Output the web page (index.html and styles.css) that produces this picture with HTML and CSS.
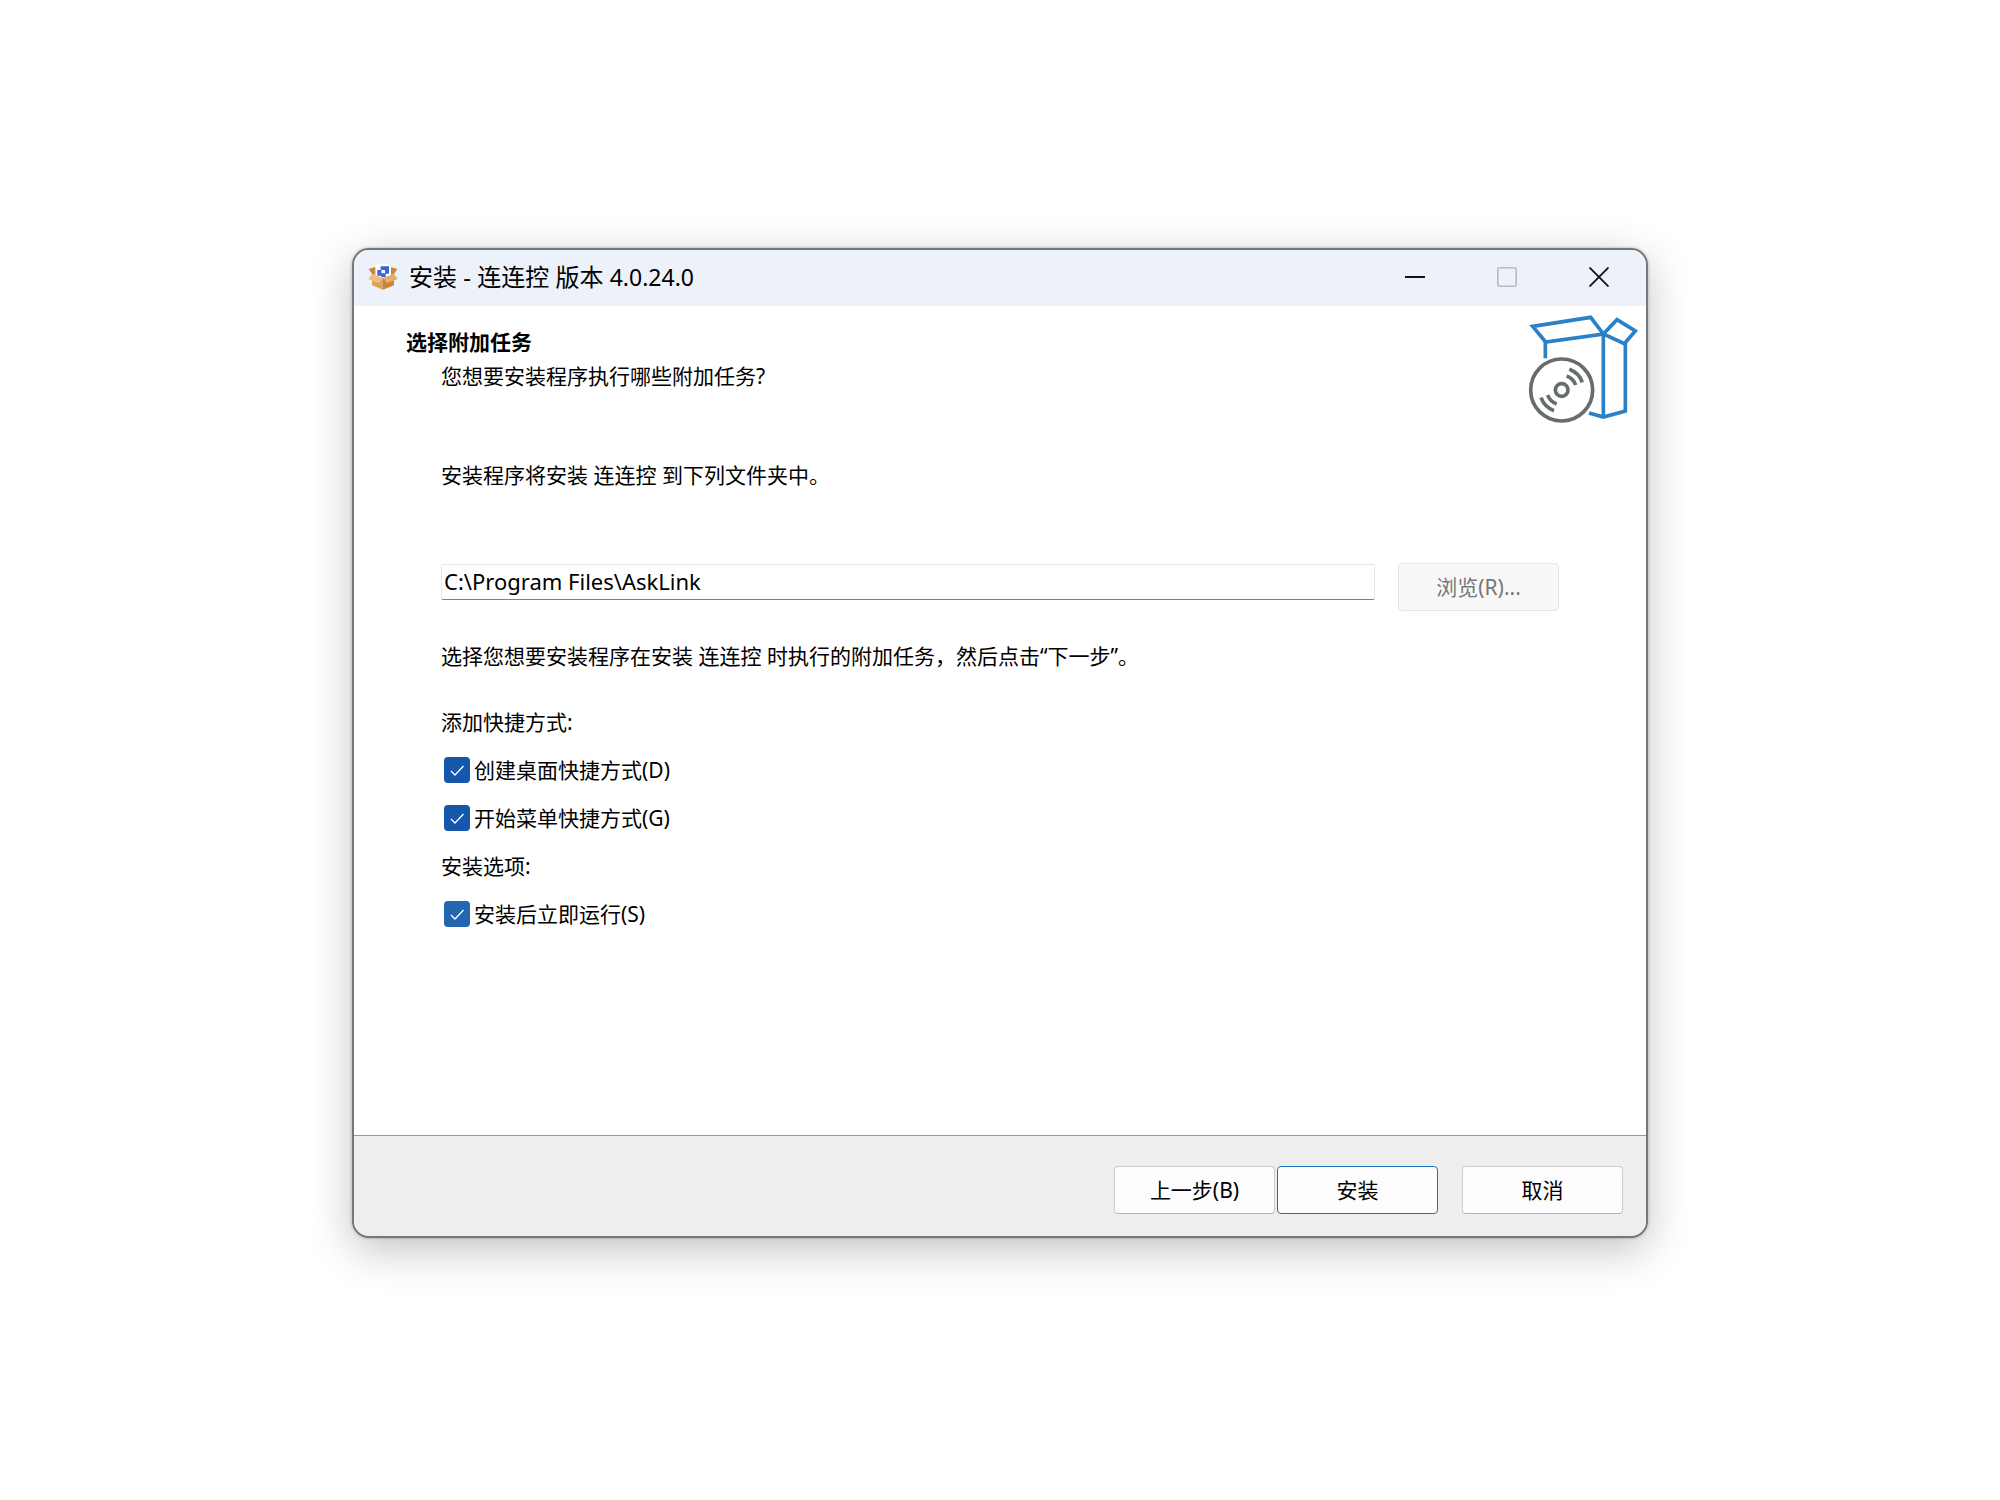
FILE: index.html
```html
<!DOCTYPE html>
<html lang="zh-CN">
<head>
    <meta charset="UTF-8">
    <meta name="viewport" content="width=device-width, initial-scale=1.0">
    <title>安装 - 连连控</title>
    <link rel="stylesheet" href="styles.css">
</head>
<body>

<div class="window">
    <!-- Title bar -->
    <div class="titlebar">
        <svg class="app-icon" viewBox="0 0 90 78" aria-hidden="true">
            <path d="M2 15 L22 9 L45 22 L68 9 L88 15 L78 30 L45 42 L12 30 Z" fill="#c98743"/>
            <rect x="22" y="1" width="47" height="42" rx="9" fill="#ffffff"/>
            <path d="M38 7h25v22h-10v10H40v-4H28V18h10z" fill="#3f62d6"/>
            <path d="M40 18h11v10H40z" fill="#ffffff"/>
            <path d="M12 32 L45 42 V77 L12 64 Z" fill="#e0a25c"/>
            <path d="M78 32 L45 42 V77 L78 64 Z" fill="#c9843f"/>
            <path d="M12 29 L45 42 L33 57 L1 45 Z" fill="#eebd85"/>
            <path d="M78 29 L45 42 L57 57 L89 45 Z" fill="#e6ad6e"/>
        </svg>
        <span class="title">安装 - 连连控 版本 <span class="version">4.0.24.0</span></span>
        <div class="window-controls">
            <button type="button" aria-label="最小化">
                <svg viewBox="0 0 20 20"><path d="M0 10H20" stroke="#111" stroke-width="2"/></svg>
            </button>
            <button type="button" aria-label="最大化" disabled>
                <svg viewBox="0 0 20 20"><rect x="0.8" y="0.8" width="18.4" height="18.4" rx="2" fill="none" stroke="#b8babf" stroke-width="1.6"/></svg>
            </button>
            <button type="button" aria-label="关闭">
                <svg viewBox="0 0 20 20"><path d="M0.5 0.5L19.5 19.5M19.5 0.5L0.5 19.5" stroke="#111" stroke-width="1.8"/></svg>
            </button>
        </div>
    </div>

    <form>
        <!-- Page heading -->
        <div class="header">
            <div class="header-text">
                <h1>选择附加任务</h1>
                <p>您想要安装程序执行哪些附加任务?</p>
            </div>
            <svg class="setup-icon" viewBox="0 0 336 330" fill="none" stroke-width="11" aria-hidden="true">
                <g stroke="#2b80c6">
                    <path d="M14 37 L188 10 L226 60 L53 84 Z"/>
                    <path d="M226 60 L267 17 L322 51 L289 89 Z"/>
                    <path d="M52 82 V133"/>
                    <path d="M226 60 V308"/>
                    <path d="M292 87 V291 L226 309 L183 297"/>
                </g>
                <g stroke="#666d6d">
                    <circle cx="101" cy="228" r="93"/>
                    <circle cx="101" cy="228" r="19"/>
                    <path d="M124 166 A66 66 0 0 1 163 205"/>
                    <path d="M116 186 A45 45 0 0 1 143 213"/>
                    <path d="M78 290 A66 66 0 0 1 39 251"/>
                    <path d="M86 270 A45 45 0 0 1 59 243"/>
                </g>
            </svg>
        </div>

        <div class="content">
            <label for="installDir">安装程序将安装 连连控 到下列文件夹中。</label>
            <div class="path-row">
                <input type="text" id="installDir" name="installDir" value="C:\Program Files\AskLink">
                <button type="button" class="btn" disabled>浏览(R)...</button>
            </div>
            <p>选择您想要安装程序在安装 连连控 时执行的附加任务，然后点击“下一步”。</p>

            <!-- Task list -->
            <div class="tasks">
                <div class="task-group">添加快捷方式:</div>
                <div class="task">
                    <input type="checkbox" id="desktopIcon" checked>
                    <label for="desktopIcon">创建桌面快捷方式(D)</label>
                </div>
                <div class="task">
                    <input type="checkbox" id="startMenu" checked>
                    <label for="startMenu">开始菜单快捷方式(G)</label>
                </div>
                <div class="task-group">安装选项:</div>
                <div class="task">
                    <input type="checkbox" id="runAfter" class="hot" checked>
                    <label for="runAfter">安装后立即运行(S)</label>
                </div>
            </div>
        </div>

        <div class="footer">
            <button type="button" class="btn">上一步(B)</button>
            <button type="submit" class="btn btn-default">安装</button>
            <button type="button" class="btn btn-cancel">取消</button>
        </div>
    </form>
</div>

</body>
</html>
```
FILE: styles.css
```css
* {
    box-sizing: border-box;
}

body {
    margin: 0;
    padding: 248px 20px 80px;
    background-color: #fff;
    color: #000;
    font-family: "Noto Sans", "Noto Sans CJK SC", sans-serif;
    font-size: 21px;
    line-height: 32px;
}

h1,
p {
    margin: 0;
}

h1 {
    font-size: 21px;
    font-weight: bold;
}

button,
input {
    font: inherit;
    color: inherit;
}

.window {
    max-width: 1296px;
    margin: 0 auto;
    background-color: #fff;
    border: 2px solid #777;
    border-radius: 17px;
    overflow: hidden;
    box-shadow: 0 0 3px rgba(0, 0, 0, 0.3), 0 12px 44px rgba(0, 0, 0, 0.24);
}

/* Title bar */
.titlebar {
    display: flex;
    align-items: center;
    height: 56px;
    padding: 0 1px 2px 14px;
    background-color: #edf1f9;
}

.app-icon {
    width: 30px;
    height: 26px;
    margin-right: 11px;
}

.title {
    font-size: 24px;
}

.version {
    font-size: 23px;
}

.window-controls {
    display: flex;
    margin-left: auto;
}

.window-controls button {
    display: flex;
    align-items: center;
    justify-content: center;
    width: 92px;
    height: 54px;
    padding: 0;
    border: none;
    background: none;
}

.window-controls svg {
    width: 20px;
    height: 20px;
}

/* Heading */
.header {
    display: flex;
    justify-content: space-between;
    padding: 8px 6px 0 52px;
}

.header-text {
    padding-top: 12px;
}

.header-text p {
    padding: 2px 0 0 35px;
}

.setup-icon {
    width: 112px;
    height: 110px;
}

/* Content */
.content {
    padding: 35px 87px 197px;
}

.content > label {
    display: block;
}

.path-row {
    display: flex;
    align-items: flex-start;
    gap: 23px;
    margin: 72px 0 29px;
}

.path-row input {
    flex: 1;
    min-width: 0;
    height: 36px;
    margin-top: 1px;
    padding: 0 2px 2px;
    border: 1px solid #e5e5e5;
    border-bottom-color: #808080;
    border-radius: 2px;
    background-color: #fff;
    font-size: 22px;
}

.tasks {
    margin-top: 26px;
}

.task,
.task-group {
    display: flex;
    align-items: center;
    height: 48px;
}

.task {
    padding-left: 3px;
    gap: 4px;
}

.task input {
    appearance: none;
    width: 26px;
    height: 26px;
    margin: 0;
    border-radius: 4px;
    background: #1557ab url("data:image/svg+xml,%3Csvg xmlns='http://www.w3.org/2000/svg' viewBox='0 0 26 26'%3E%3Cpath d='M7 14l4 4 8.500-9' fill='none' stroke='white' stroke-width='1.300'/%3E%3C/svg%3E") center / 26px;
}

.task input.hot {
    background-color: #2465b2;
}

/* Buttons */
.btn {
    width: 161px;
    height: 48px;
    padding: 0;
    border: 1px solid #ccc;
    border-bottom-color: #b5b5b5;
    border-radius: 4px;
    background-color: #fdfdfd;
}

.btn:disabled {
    border-color: #e5e5e5;
    background-color: #f8f8f8;
    color: #777;
}

.btn-default {
    border-color: #1a6fc4;
}

.btn-cancel {
    margin-left: 22px;
}

.footer {
    display: flex;
    justify-content: flex-end;
    gap: 2px;
    padding: 30px 23px 22px;
    border-top: 1px solid #999;
    background-color: #eee;
}
```
